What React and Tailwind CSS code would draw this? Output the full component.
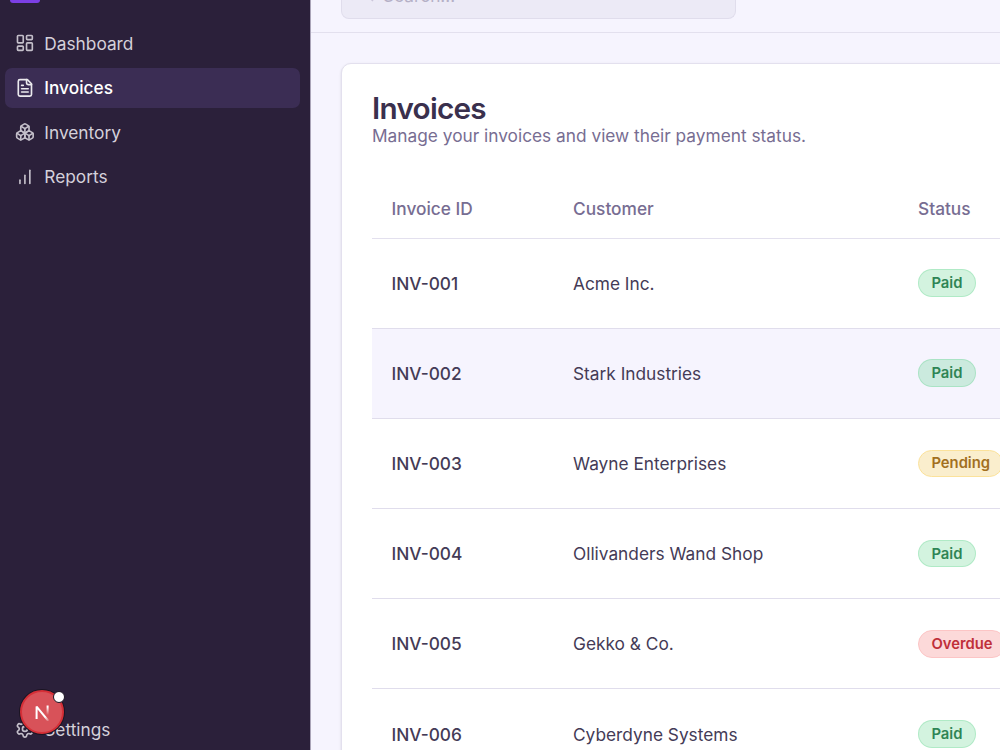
import React from 'react';

const NAV = [
  {
    label: 'Dashboard',
    icon: (
      <>
        <rect width="7" height="9" x="3" y="3" rx="1" />
        <rect width="7" height="5" x="14" y="3" rx="1" />
        <rect width="7" height="9" x="14" y="12" rx="1" />
        <rect width="7" height="5" x="3" y="16" rx="1" />
      </>
    ),
  },
  {
    label: 'Invoices',
    active: true,
    icon: (
      <>
        <path d="M15 2H6a2 2 0 0 0-2 2v16a2 2 0 0 0 2 2h12a2 2 0 0 0 2-2V7Z" />
        <path d="M14 2v4a2 2 0 0 0 2 2h4" />
        <path d="M10 9H8" />
        <path d="M16 13H8" />
        <path d="M16 17H8" />
      </>
    ),
  },
  {
    label: 'Inventory',
    icon: (
      <>
        <path d="M2.97 12.92A2 2 0 0 0 2 14.63v3.24a2 2 0 0 0 .97 1.71l3 1.8a2 2 0 0 0 2.06 0L12 19v-5.5l-5-3-4.03 2.42Z" />
        <path d="m7 16.5-4.74-2.85" />
        <path d="m7 16.5 5-3" />
        <path d="M7 16.5v5.17" />
        <path d="M12 13.5V19l3.97 2.38a2 2 0 0 0 2.06 0l3-1.8a2 2 0 0 0 .97-1.71v-3.24a2 2 0 0 0-.97-1.71L17 10.5l-5 3Z" />
        <path d="m17 16.5-5-3" />
        <path d="m17 16.5 4.74-2.85" />
        <path d="M17 16.5v5.17" />
        <path d="M7.97 4.42A2 2 0 0 0 7 6.13v4.37l5 3 5-3V6.13a2 2 0 0 0-.97-1.71l-3-1.8a2 2 0 0 0-2.06 0l-3 1.8Z" />
        <path d="M12 8 7.26 5.15" />
        <path d="m12 8 4.74-2.85" />
        <path d="M12 13.5V8" />
      </>
    ),
  },
  {
    label: 'Reports',
    icon: (
      <>
        <path d="M12 20V10" />
        <path d="M18 20V4" />
        <path d="M6 20v-4" />
      </>
    ),
  },
];

const SETTINGS_ICON = (
  <>
    <path d="M12.22 2h-.44a2 2 0 0 0-2 2v.18a2 2 0 0 1-1 1.73l-.43.25a2 2 0 0 1-2 0l-.15-.08a2 2 0 0 0-2.73.73l-.22.38a2 2 0 0 0 .73 2.73l.15.1a2 2 0 0 1 1 1.72v.51a2 2 0 0 1-1 1.74l-.15.09a2 2 0 0 0-.73 2.73l.22.38a2 2 0 0 0 2.73.73l.15-.08a2 2 0 0 1 2 0l.43.25a2 2 0 0 1 1 1.73V20a2 2 0 0 0 2 2h.44a2 2 0 0 0 2-2v-.18a2 2 0 0 1 1-1.73l.43-.25a2 2 0 0 1 2 0l.15.08a2 2 0 0 0 2.73-.73l.22-.39a2 2 0 0 0-.73-2.73l-.15-.08a2 2 0 0 1-1-1.74v-.5a2 2 0 0 1 1-1.74l.15-.09a2 2 0 0 0 .73-2.73l-.22-.38a2 2 0 0 0-2.73-.73l-.15.08a2 2 0 0 1-2 0l-.43-.25a2 2 0 0 1-1-1.73V4a2 2 0 0 0-2-2z" />
    <circle cx="12" cy="12" r="3" />
  </>
);

const INVOICES = [
  ['INV-001', 'Acme Inc.', 'Paid'],
  ['INV-002', 'Stark Industries', 'Paid'],
  ['INV-003', 'Wayne Enterprises', 'Pending'],
  ['INV-004', 'Ollivanders Wand Shop', 'Paid'],
  ['INV-005', 'Gekko & Co.', 'Overdue'],
  ['INV-006', 'Cyberdyne Systems', 'Paid'],
];

const BADGE = {
  Paid: 'border-[#22c55e]/20 bg-[#22c55e]/20 text-[#2f8555]',
  Pending: 'border-[#fbe29b] bg-[#faeecd] text-[#a2701f]',
  Overdue: 'border-[#fcc5c5] bg-[#fcd9d9] text-[#c0303a]',
};

function NavItem({ label, icon, active }) {
  return (
    <a
      className={
        'flex h-[39.6px] items-center gap-[9.6px] rounded-[7px] px-[9.9px] ' +
        (active ? 'bg-[#3b2d54] font-medium text-white' : 'text-[#d5d1da]')
      }
    >
      <svg className="size-[19.8px] shrink-0 opacity-90" viewBox="0 0 24 24" fill="none" stroke="currentColor" strokeWidth="2" strokeLinecap="round" strokeLinejoin="round">
        {icon}
      </svg>
      <span>{label}</span>
    </a>
  );
}

function DevBadge() {
  return (
    <div className="absolute bottom-[16px] left-[20px] flex size-[44px] items-center justify-center rounded-full border-2 border-[#d52f37] bg-[#d85259] shadow-[0_0_0_1px_#1b1422]">
      <svg className="size-[17px]" viewBox="0 0 17 17" fill="none" strokeWidth="2">
        <defs>
          <linearGradient id="diag" x1="8" y1="8" x2="15" y2="17" gradientUnits="userSpaceOnUse">
            <stop offset="0.5" stopColor="#fff" />
            <stop offset="1" stopColor="#fff" stopOpacity="0.1" />
          </linearGradient>
          <linearGradient id="stem" x1="14" y1="1" x2="14" y2="11" gradientUnits="userSpaceOnUse">
            <stop offset="0.2" stopColor="#fff" />
            <stop offset="1" stopColor="#fff" stopOpacity="0" />
          </linearGradient>
        </defs>
        <path d="M2.6 15V2.6L14.4 17" stroke="url(#diag)" strokeLinejoin="bevel" />
        <path d="M13.6 1.5V11" stroke="url(#stem)" />
      </svg>
      <span className="absolute -top-[1px] right-[-3px] size-[12px] rounded-full border border-[#1b1422] bg-white" />
    </div>
  );
}

function Sidebar() {
  return (
    <aside className="relative flex h-full w-[311px] shrink-0 flex-col border-r border-[#aaa4b8] bg-[#2b203a] pl-[5px] pr-[10px] text-[17.3px] leading-[25px]">
      <div className="h-[23.5px] shrink-0 pl-[5px]">
        <div className="h-[2.5px] w-[29.6px] rounded-b-[6px] bg-[#7c3fe4]" />
      </div>
      <nav className="flex flex-col gap-[4.9px]">
        {NAV.map((n) => (
          <NavItem key={n.label} {...n} />
        ))}
      </nav>
      <div className="mt-auto pb-[1px]">
        <NavItem label="Settings" icon={SETTINGS_ICON} />
      </div>
      <DevBadge />
    </aside>
  );
}

function Header() {
  return (
    <header className="h-[33px] shrink-0 border-b border-[#e3e0ee] pl-[30px]">
      <div className="flex h-[18.5px] w-[395px] items-end overflow-hidden rounded-b-[8px] border border-t-0 border-[#e0ddec] bg-[#eceaf6] pl-[27px]">
        <div className="flex h-[35px] shrink-0 items-end gap-[5px] pb-[10px] text-[17.3px] leading-[25px] text-[#b5b0c6]">
          <svg className="mb-[5.5px] size-[9px]" viewBox="0 0 9 9" stroke="#cbc6da" strokeWidth="1.5">
            <path d="M1 5l3 3" />
          </svg>
          <span>Search...</span>
        </div>
      </div>
    </header>
  );
}

export default function App() {
  return (
    <div className="flex h-[750px] w-[1000px] overflow-hidden bg-[#f6f4fe] font-[Inter,sans-serif]">
      <Sidebar />
      <div className="flex min-w-0 flex-1 flex-col overflow-hidden">
        <Header />
        <main className="pl-[30px] pt-[30px]">
          <section className="w-[1000px] rounded-[10px] border border-[#e3e0ee] bg-white px-[30px] pb-[30px] pt-[29px] shadow-sm">
            <h1 className="text-[29.7px] font-semibold leading-[30px] tracking-[-0.74px] text-[#3a304d]">Invoices</h1>
            <p className="text-[17.3px] leading-[25px] text-[#776d92]">Manage your invoices and view their payment status.</p>
            <div className="mt-[30.5px] text-[17.3px] leading-[25px] text-[#443b56]">
              <div className="flex h-[60px] items-center border-b border-[#e3e0ee] font-medium text-[#776d92]">
                <div className="w-[201px] pl-[19.6px]">Invoice ID</div>
                <div className="w-[345px]">Customer</div>
                <div>Status</div>
              </div>
              {INVOICES.map(([id, customer, status], i) => (
                <div key={id} className={'flex h-[90.2px] items-center border-b border-[#e0ddec] ' + (i === 1 ? 'bg-[#f6f4fe]' : '')}>
                  <div className="w-[201px] pl-[19.6px] font-medium">{id}</div>
                  <div className="w-[345px]">{customer}</div>
                  <div className={'rounded-full border px-[12.4px] py-[2.8px] text-[14.8px] font-semibold leading-[20px] ' + BADGE[status]}>{status}</div>
                </div>
              ))}
            </div>
          </section>
        </main>
      </div>
    </div>
  );
}
